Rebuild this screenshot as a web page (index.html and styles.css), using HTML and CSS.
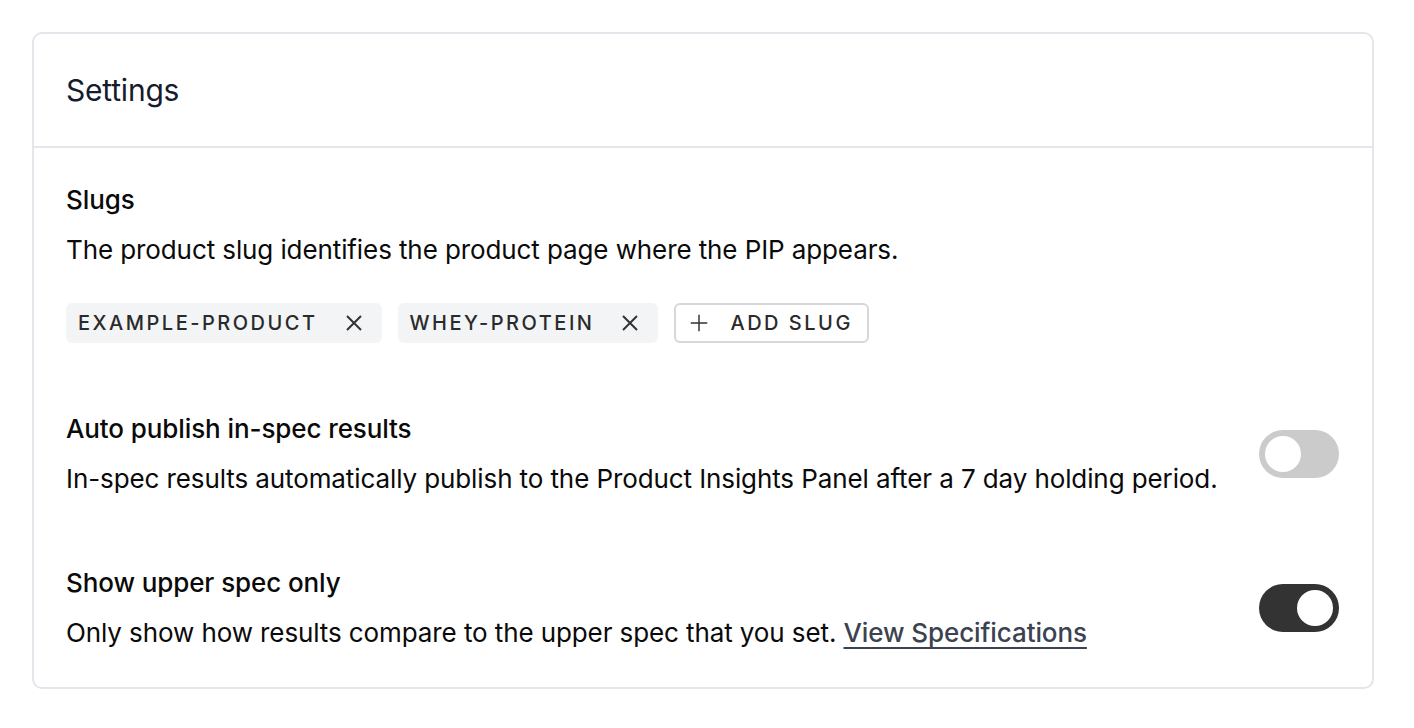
FILE: index.html
```html
<!DOCTYPE html>
<html lang="en">
<head>
    <meta charset="UTF-8">
    <title>Settings</title>
    <link rel="stylesheet" href="styles.css">
</head>
<body>

<div class="card">
    <div class="card-header">
        <h2>Settings</h2>
    </div>

    <div class="card-body">
        <div class="setting">
            <div class="setting-text">
                <h3>Slugs</h3>
                <p>The product slug identifies the product page where the PIP appears.</p>
                <div class="chips">
                    <span class="chip">EXAMPLE-PRODUCT
                        <svg class="chip-x" viewBox="0 0 24 24"><path d="M5 5L19 19M19 5L5 19"/></svg>
                    </span>
                    <span class="chip">WHEY-PROTEIN
                        <svg class="chip-x" viewBox="0 0 24 24"><path d="M5 5L19 19M19 5L5 19"/></svg>
                    </span>
                    <button class="chip chip-add">
                        <svg class="chip-plus" viewBox="0 0 24 24"><path d="M12 3V21M3 12H21"/></svg>
                        ADD SLUG
                    </button>
                </div>
            </div>
        </div>

        <div class="setting">
            <div class="setting-text">
                <h3>Auto publish in-spec results</h3>
                <p>In-spec results automatically publish to the Product Insights Panel after a 7 day holding period.</p>
            </div>
            <span class="switch"></span>
        </div>

        <div class="setting">
            <div class="setting-text">
                <h3>Show upper spec only</h3>
                <p>Only show how results compare to the upper spec that you set. <a href="#">View Specifications</a></p>
            </div>
            <span class="switch on"></span>
        </div>
    </div>
</div>

</body>
</html>
```

FILE: styles.css
```css
body {
    font-family: 'Inter', 'Noto Sans', sans-serif;
    margin: 0;
    padding: 32px 40px 32px 32px;
    background: #fff;
    color: #0a0a0a;
}
.card {
    border: 2px solid #e5e6eb;
    border-radius: 10px;
    overflow: hidden;
}
.card-header {
    height: 112px;
    padding: 0 32px;
    display: flex;
    align-items: center;
    border-bottom: 2px solid #e5e6eb;
}
.card-header h2 {
    margin: 0;
    font-size: 30px;
    font-weight: 400;
    letter-spacing: -0.2px;
    color: #161b2e;
}
.card-body {
    padding: 34px 32px 36px;
    display: flex;
    flex-direction: column;
    gap: 68px;
}
.setting {
    display: flex;
    align-items: center;
    justify-content: space-between;
}
.setting-text h3 {
    margin: 0 0 14px;
    font-size: 26px;
    font-weight: 500;
    letter-spacing: -0.1px;
    line-height: 36px;
}
.setting-text p {
    margin: 0;
    font-size: 26px;
    letter-spacing: -0.1px;
    line-height: 36px;
}
.setting-text a {
    color: #3b4252;
    font-weight: 500;
    text-underline-offset: 5px;
    text-decoration-thickness: 2px;
}
.chips {
    display: flex;
    gap: 16px;
    margin-top: 35px;
}
.chip {
    display: flex;
    align-items: center;
    gap: 24px;
    height: 40px;
    box-sizing: border-box;
    padding: 0 16px 0 12px;
    background: #f3f4f6;
    border-radius: 6px;
    font-family: 'Inter', sans-serif;
    font-size: 20px;
    font-weight: 500;
    letter-spacing: 2.5px;
    color: #2a2a2a;
}
.chip-x {
    width: 24px;
    height: 24px;
    stroke: #333;
    stroke-width: 2;
    fill: none;
}
.chip-add {
    background: #fff;
    border: 2px solid #d6d7da;
    gap: 20px;
    padding: 0 14px 0 12px;
}
.chip-plus {
    width: 22px;
    height: 22px;
    stroke: #333;
    stroke-width: 1.6;
    fill: none;
}
.switch {
    width: 80px;
    height: 48px;
    border-radius: 24px;
    background: #cbcbcb;
    position: relative;
    flex-shrink: 0;
    margin-right: 1px;
}
.switch::after {
    content: '';
    position: absolute;
    top: 6px;
    left: 6px;
    width: 36px;
    height: 36px;
    border-radius: 50%;
    background: #fff;
}
.switch.on {
    background: #333;
}
.switch.on::after {
    left: 38px;
}
```
